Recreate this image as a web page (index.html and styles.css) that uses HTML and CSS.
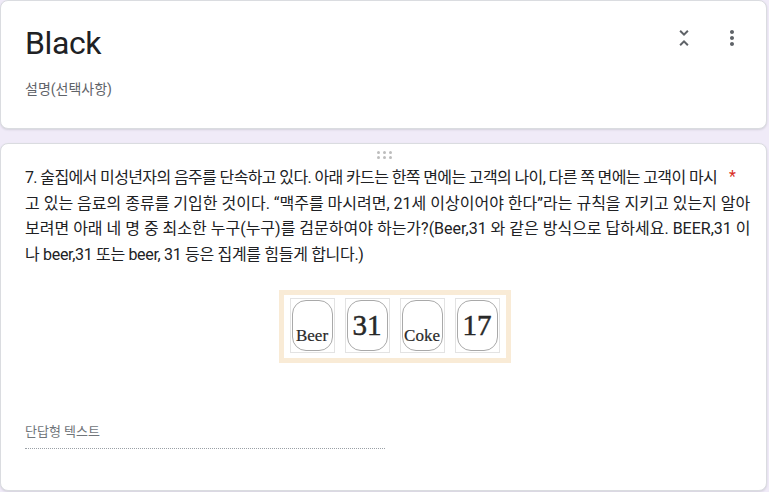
FILE: index.html
```html
<!DOCTYPE html>
<html lang="ko">
<head>
<meta charset="utf-8">
<link rel="stylesheet" href="styles.css">
</head>
<body>
<div class="page">
  <section class="card header-card">
    <div class="header-row">
      <h1 class="title">Black</h1>
      <div class="header-icons">
        <svg class="icon" viewBox="0 0 24 24" width="24" height="24"><path d="M7.41 18.59L8.83 20 12 16.83 15.17 20l1.41-1.41L12 14l-4.59 4.59zm9.18-13.18L15.17 4 12 7.17 8.83 4 7.41 5.41 12 10l4.59-4.59z"/></svg>
        <svg class="icon" viewBox="0 0 24 24" width="24" height="24"><path d="M12 8c1.1 0 2-.9 2-2s-.9-2-2-2-2 .9-2 2 .9 2 2 2zm0 2c-1.1 0-2 .9-2 2s.9 2 2 2 2-.9 2-2-.9-2-2-2zm0 6c-1.1 0-2 .9-2 2s.9 2 2 2 2-.9 2-2-.9-2-2-2z"/></svg>
      </div>
    </div>
    <p class="desc">설명(선택사항)</p>
  </section>

  <section class="card question-card">
    <div class="drag">
      <span></span><span></span><span></span><span></span><span></span><span></span>
    </div>
    <div class="q-row">
      <p class="q-text"><span class="ln ln1">7. 술집에서 미성년자의 음주를 단속하고 있다. 아래 카드는 한쪽 면에는 고객의 나이, 다른 쪽 면에는 고객이 마시</span><br><span class="ln">고 있는 음료의 종류를 기입한 것이다. “맥주를 마시려면, 21세 이상이어야 한다”라는 규칙을 지키고 있는지 알아</span><br><span class="ln">보려면 아래 네 명 중 최소한 누구(누구)를 검문하여야 하는가?(Beer,31 와 같은 방식으로 답하세요. BEER,31 이</span><br><span class="ln ln4">나 beer,31 또는 beer, 31 등은 집계를 힘들게 합니다.)</span></p>
      <span class="required">*</span>
    </div>
    <div class="figure">
      <div class="frame">
        <div class="tile"><div class="face word">Beer</div></div>
        <div class="tile"><div class="face num">31</div></div>
        <div class="tile"><div class="face word">Coke</div></div>
        <div class="tile"><div class="face num">17</div></div>
      </div>
    </div>
    <div class="answer">
      <span class="answer-label">단답형 텍스트</span>
    </div>
  </section>
</div>
</body>
</html>
```

FILE: styles.css
```css
* { box-sizing: border-box; }
html, body {
  margin: 0;
  padding: 0;
  background: #f0ebf8;
}
body {
  font-family: Roboto, "Noto Sans CJK KR", sans-serif;
  color: #202124;
  width: 769px;
  height: 492px;
  overflow: hidden;
}
.page {
  width: 767px;
  display: flex;
  flex-direction: column;
  gap: 14px;
}
.card {
  background: #fff;
  border: 1px solid #dadce0;
  border-radius: 8px;
  box-shadow: 0 1px 2px rgba(60,64,67,0.15);
}
.header-card {
  height: 129px;
  padding: 22px 24px 0 24px;
}
.header-row {
  display: flex;
  align-items: flex-start;
  justify-content: space-between;
}
.title {
  margin: 0;
  font-family: Roboto, sans-serif;
  font-weight: 400;
  font-size: 32px;
  line-height: 40px;
  color: #202124;
  letter-spacing: -0.4px;
}
.header-icons {
  display: flex;
  gap: 24px;
  margin-top: 3px;
  margin-right: -2px;
}
.icon { fill: #5f6368; display: block; }
.desc {
  margin: 16px 0 0 0;
  font-size: 14px;
  line-height: 20px;
  color: #5f6368;
}
.question-card {
  height: 348px;
  padding: 0 24px;
  display: flex;
  flex-direction: column;
}
.drag {
  align-self: center;
  display: grid;
  grid-template-columns: repeat(3, 3px);
  gap: 2px 3px;
  margin-top: 7px;
  margin-left: 2px;
}
.drag span {
  width: 3px;
  height: 3px;
  border-radius: 50%;
  background: #bdbdbd;
}
.q-row {
  display: flex;
  align-items: flex-start;
  margin-top: 6px;
}
.q-text {
  margin: 0;
  flex: 1;
  min-width: 0;
  font-size: 16px;
  line-height: 25.5px;
  color: #202124;
  white-space: nowrap;
}
.ln1 { letter-spacing: -0.62px; }
.ln4 { letter-spacing: -0.32px; }
.required {
  flex: none;
  color: #d93025;
  font-size: 16px;
  line-height: 24px;
  margin-right: 6px;
}
.figure {
  display: flex;
  justify-content: center;
  margin-top: 23px;
  padding-left: 22px;
}
.frame {
  display: flex;
  gap: 10px;
  padding: 3px 6px 5px 6px;
  border: 5px solid #f9ebd6;
  background: #fff;
}
.tile {
  width: 45px;
  height: 55px;
  border: 1px solid #e3e3e3;
  padding: 1px 1px;
}
.face {
  height: 100%;
  border: 1px solid #a9a9a9;
  border-radius: 14px;
  display: flex;
  justify-content: center;
  font-family: "Liberation Serif", "DejaVu Serif", serif;
  color: #2a2a2a;
}
.face.word {
  align-items: flex-end;
  font-size: 17px;
  line-height: 20px;
  padding-bottom: 4px;
  letter-spacing: 0;
  -webkit-text-stroke: 0.2px #2a2a2a;
}
.face.num {
  align-items: center;
  font-size: 29px;
  font-weight: 400;
  -webkit-text-stroke: 0.5px #222;
  padding-bottom: 1px;
}
.answer {
  margin-top: 58px;
  width: 360px;
  border-bottom: 1px dotted #9aa0a6;
  padding-bottom: 6px;
}
.answer-label {
  font-size: 13px;
  line-height: 20px;
  color: #70757a;
}
```
